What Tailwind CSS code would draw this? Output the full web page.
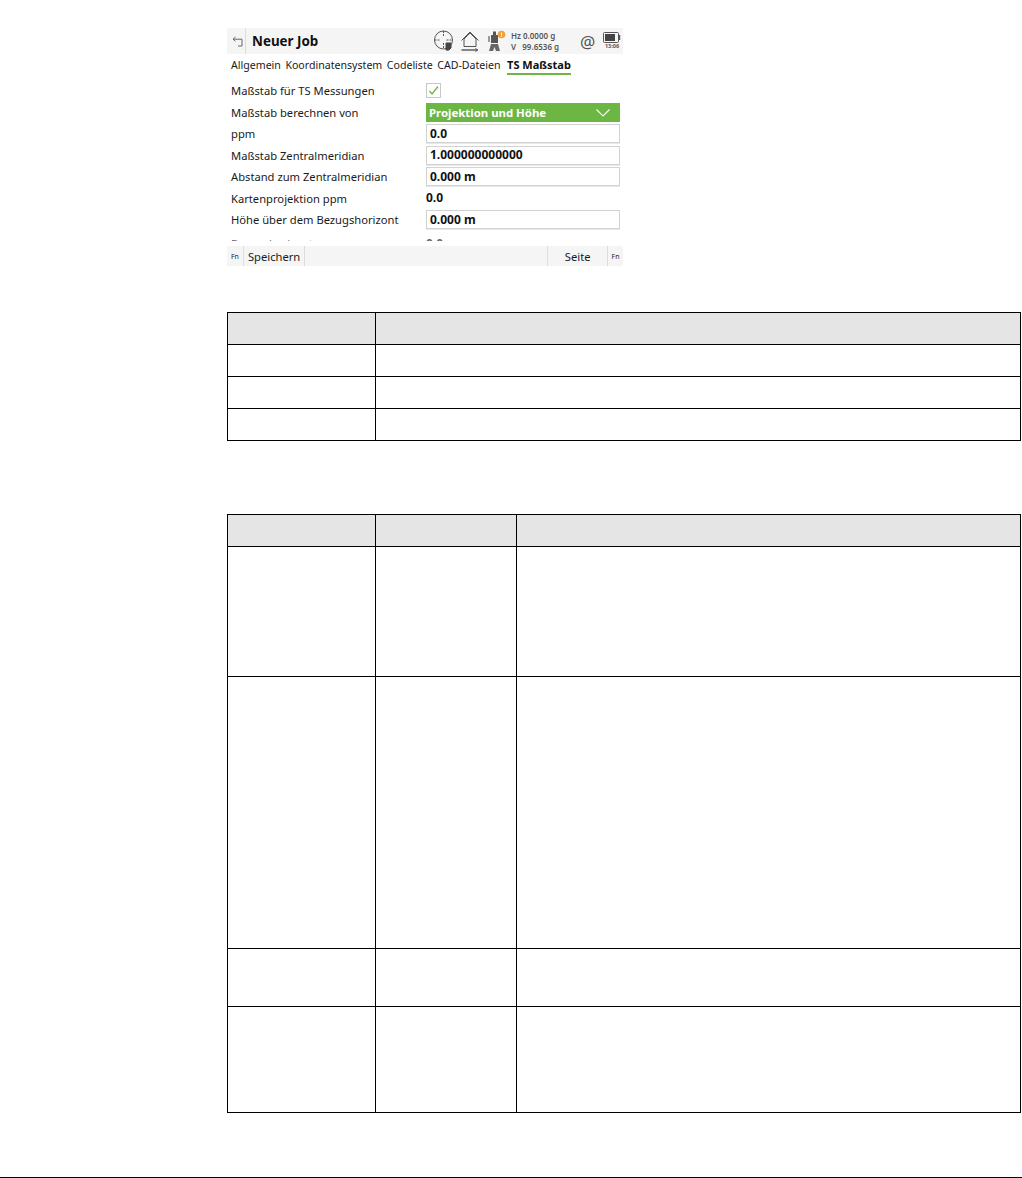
<!DOCTYPE html>
<html lang="de">
<head>
    <meta charset="UTF-8">
    <title>TS Maßstab</title>
    <script src="https://cdn.jsdelivr.net/npm/@tailwindcss/browser@4"></script>
</head>
<body class="bg-white font-['Noto_Sans',sans-serif] w-[1022px] h-[1178px] overflow-hidden">
    <div class="pl-[227px] pt-[28px] h-[1177px]">
        <!-- Device screen -->
        <div class="w-[396px] h-[238px] flex flex-col text-[11.2px] text-[#1a1a1a] leading-none">
            <div class="h-[26px] bg-[#f5f5f5] flex items-center shrink-0">
                <svg class="ml-[5px] w-[11px] h-[11px]" viewBox="0 0 11 11" fill="none" stroke="#666" stroke-width="1"><path d="M3.5 1 L1 3.2 L3.5 5.2"/><path d="M1 3.2 H10 V10 H6"/></svg>
                <div class="ml-[2px] w-px h-[26px] bg-[#ddd]"></div>
                <div class="ml-[6px] pt-[1px] w-[180px] whitespace-nowrap text-[13.4px] font-bold text-[#111]">Neuer Job</div>
                <svg class="ml-[1px] w-[22px] h-[22px]" viewBox="0 0 22 22" fill="none" stroke="#555" stroke-width="1"><circle cx="10.5" cy="10" r="9"/><path d="M10.5 1 V7 M10.5 13 V19 M1.5 10 H7.5 M13.5 10 H19.5" stroke-dasharray="2 1"/><path d="M13 13 h5 v5 q-2 3 -5 2 z" fill="#444" stroke="#444"/></svg>
                <svg class="ml-[6px] w-[18px] h-[21px]" viewBox="0 0 18 21" fill="none" stroke="#555" stroke-width="1"><path d="M3 15.5 V8 L9 2 L15 8 V15.5 H3"/><path d="M.5 9.5 L9 1 L17.5 9.5"/><path d="M.5 19 H16" stroke-width="1.4"/><path d="M14.5 17.5 L17 19 L14.5 20.5"/></svg>
                <svg class="ml-[7px] w-[20px] h-[22px]" viewBox="0 0 20 22"><path d="M5 5 h2 V1.5 h3 V5 h2 v8 h-7 z" fill="#555"/><path d="M2 6 h2 v6 h-2 z" fill="#999"/><path d="M5 14 h7 l2 7 h-4 l-1.5 -4 l-1.5 4 h-4 z" fill="#666"/><circle cx="15.5" cy="4.5" r="3.8" fill="#f0a03c"/><path d="M15.5 2.5 v3 M15.5 6 v.8" stroke="#fff" stroke-width=".9"/></svg>
                <div class="ml-[5px] text-[8px] font-semibold text-[#555] w-[65px] leading-[11.5px]">
                    <div>Hz 0.0000 g</div>
                    <div>V &nbsp;&nbsp;99.6536 g</div>
                </div>
                <div class="ml-[4px] w-[15px] text-[17px] text-[#555] leading-none">@</div>
                <div class="ml-[8px] flex flex-col items-center">
                    <svg class="w-[18px] h-[11px]" viewBox="0 0 18 11"><rect x=".5" y=".5" width="15" height="10" rx="1" fill="none" stroke="#555"/><rect x="2" y="2" width="10" height="7" fill="#444"/><path d="M16.5 3 v5" stroke="#555" stroke-width="1.4"/></svg>
                    <div class="text-[5.5px] font-bold text-[#555] mt-[1px]">13:06</div>
                </div>
            </div>
            <div class="h-[21px] flex items-center pl-[4px] gap-[4.5px] shrink-0 text-[10.6px]">
                <span class="pt-[1px]">Allgemein</span>
                <span class="pt-[1px]">Koordinatensystem</span>
                <span class="pt-[1px]">Codeliste</span>
                <span class="pt-[1px]">CAD-Dateien</span>
                <span class="ml-[2px] font-bold text-[11px] text-[#111] h-[21px] pt-[5px] border-b-2 border-[#6cb644]">TS Maßstab</span>
            </div>
            <div class="h-[161px] mt-[5px] overflow-hidden pl-[4px] shrink-0">
                <div class="h-[21.5px] flex items-center">
                    <div class="w-[195px]">Maßstab für TS Messungen</div>
                    <div class="w-[15px] h-[15px] border border-[#c8c8c8] flex items-center justify-center">
                        <svg class="w-[11px] h-[11px]" viewBox="0 0 11 11" fill="none" stroke="#6cb644" stroke-width="1.3"><path d="M1.5 6 L4 9 L10 1.5"/></svg>
                    </div>
                </div>
                <div class="h-[21.5px] flex items-center">
                    <div class="w-[195px]">Maßstab berechnen von</div>
                    <div class="w-[194px] h-[19px] bg-[#6cb644] flex items-center justify-between pl-[3px] pr-[10px] pt-[1px] text-white font-bold text-[11.4px]">
                        <span>Projektion und Höhe</span>
                        <svg class="w-[14px] h-[8px]" viewBox="0 0 14 8" fill="none" stroke="#fff" stroke-width="1.1"><path d="M.5 .5 L7 7 L13.5 .5"/></svg>
                    </div>
                </div>
                <div class="h-[21.5px] flex items-center">
                    <div class="w-[195px]">ppm</div>
                    <div class="w-[194px] h-[19px] border border-[#d2d2d2] shadow-[0_1px_0_#e8e8e8] flex items-center pl-[3px] font-bold text-[12px] text-[#111]">0.0</div>
                </div>
                <div class="h-[21.5px] flex items-center">
                    <div class="w-[195px]">Maßstab Zentralmeridian</div>
                    <div class="w-[194px] h-[19px] border border-[#d2d2d2] shadow-[0_1px_0_#e8e8e8] flex items-center pl-[3px] font-bold text-[12px] text-[#111]">1.000000000000</div>
                </div>
                <div class="h-[21.5px] flex items-center">
                    <div class="w-[195px]">Abstand zum Zentralmeridian</div>
                    <div class="w-[194px] h-[19px] border border-[#d2d2d2] shadow-[0_1px_0_#e8e8e8] flex items-center pl-[3px] font-bold text-[12px] text-[#111]">0.000 m</div>
                </div>
                <div class="h-[21.5px] flex items-center">
                    <div class="w-[195px]">Kartenprojektion ppm</div>
                    <div class="font-bold text-[12px] text-[#111]">0.0</div>
                </div>
                <div class="h-[21.5px] flex items-center">
                    <div class="w-[195px]">Höhe über dem Bezugshorizont</div>
                    <div class="w-[194px] h-[19px] border border-[#d2d2d2] shadow-[0_1px_0_#e8e8e8] flex items-center pl-[3px] font-bold text-[12px] text-[#111]">0.000 m</div>
                </div>
                <div class="h-[21.5px] pt-[5px] flex items-center text-[#666]">
                    <div class="w-[195px]">Bezugshorizont ppm</div>
                    <div class="font-bold text-[12px]">0.0</div>
                </div>
            </div>
            <div class="h-[20px] mt-[5px] bg-[#f5f5f5] flex items-center shrink-0">
                <div class="w-[16px] text-center text-[7px]">Fn</div>
                <div class="w-px h-[20px] bg-[#ddd]"></div>
                <div class="px-[4px] pt-[1px]">Speichern</div>
                <div class="w-px h-[20px] bg-[#ddd]"></div>
                <div class="ml-[242px] w-px h-[20px] bg-[#ddd]"></div>
                <div class="w-[59px] pt-[1px] text-center">Seite</div>
                <div class="w-px h-[20px] bg-[#ddd]"></div>
                <div class="w-[15px] text-center text-[7px]">Fn</div>
            </div>
        </div>

        <!-- Table 1 -->
        <table class="mt-[46px] w-[794px] table-fixed border-collapse border border-black">
            <colgroup><col class="w-[148px]"><col></colgroup>
            <tr class="h-[32px] bg-[#e5e5e5]"><th class="border border-black"></th><th class="border border-black"></th></tr>
            <tr class="h-[32px]"><td class="border border-black"></td><td class="border border-black"></td></tr>
            <tr class="h-[32px]"><td class="border border-black"></td><td class="border border-black"></td></tr>
            <tr class="h-[32px]"><td class="border border-black"></td><td class="border border-black"></td></tr>
        </table>

        <!-- Table 2 -->
        <table class="mt-[73px] w-[794px] table-fixed border-collapse border border-black">
            <colgroup><col class="w-[148px]"><col class="w-[141px]"><col></colgroup>
            <tr class="h-[32px] bg-[#e5e5e5]"><th class="border border-black"></th><th class="border border-black"></th><th class="border border-black"></th></tr>
            <tr class="h-[130px]"><td class="border border-black"></td><td class="border border-black"></td><td class="border border-black"></td></tr>
            <tr class="h-[272px]"><td class="border border-black"></td><td class="border border-black"></td><td class="border border-black"></td></tr>
            <tr class="h-[58px]"><td class="border border-black"></td><td class="border border-black"></td><td class="border border-black"></td></tr>
            <tr class="h-[106px]"><td class="border border-black"></td><td class="border border-black"></td><td class="border border-black"></td></tr>
        </table>
    </div>
    <div class="h-px bg-black"></div>
</body>
</html>
